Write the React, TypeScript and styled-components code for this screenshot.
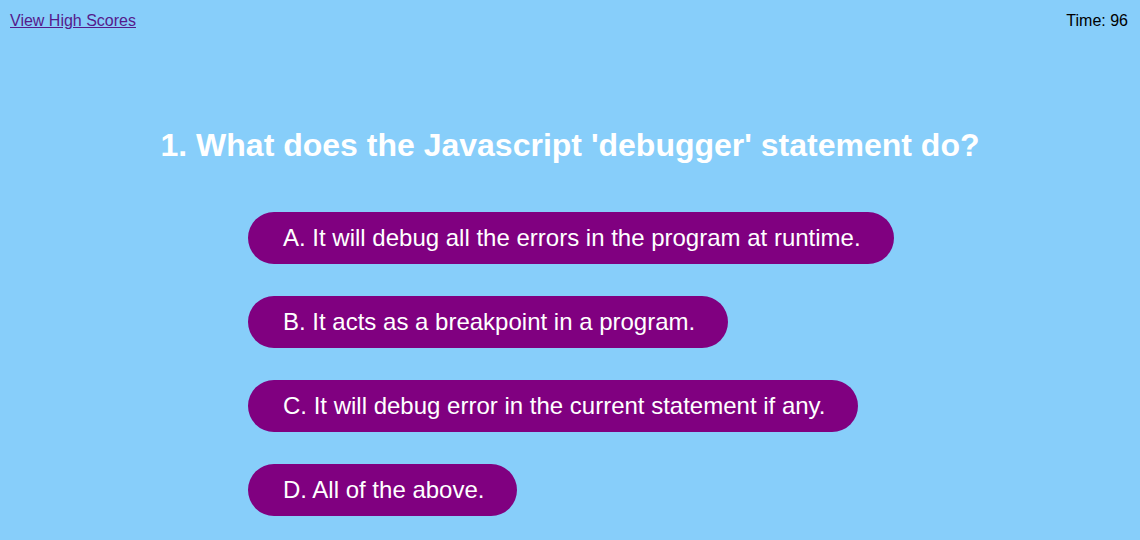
import React from 'react'
import styled, { createGlobalStyle } from 'styled-components'

const GlobalStyle = createGlobalStyle`
  html, body {
    margin: 0;
    padding: 0;
    background: #87cefa;
    font-family: "Liberation Sans", Arial, sans-serif;
  }
`

const Page = styled.div`
  width: 100%;
  min-height: 540px;
  background: #87cefa;
`

const Header = styled.header`
  display: flex;
  justify-content: space-between;
  align-items: center;
  padding: 12px 12px 0 10px;
  font-size: 16px;
`

const ScoresLink = styled.a`
  color: #551a8b;
  text-decoration: underline;
`

const Timer = styled.span`
  color: #000;
`

const Quiz = styled.main`
  display: flex;
  flex-direction: column;
  align-items: center;
  margin-top: 97px;
`

const Question = styled.h1`
  margin: 0 0 48px;
  color: #fff;
  font-size: 32px;
  font-weight: bold;
  text-align: center;
`

const Choices = styled.div`
  display: flex;
  flex-direction: column;
  align-items: flex-start;
  gap: 32px;
  width: 644px;
`

const Choice = styled.button`
  height: 52px;
  padding: 0 33px 0 35px;
  border: none;
  border-radius: 26px;
  background: #800080;
  color: #fff;
  font-family: "Liberation Sans", Arial, sans-serif;
  font-size: 24px;
  white-space: nowrap;
  cursor: pointer;
`

const choices = [
  'A. It will debug all the errors in the program at runtime.',
  'B. It acts as a breakpoint in a program.',
  'C. It will debug error in the current statement if any.',
  'D. All of the above.',
]

export default function App() {
  return (
    <Page>
      <GlobalStyle />
      <Header>
        <ScoresLink href="#">View High Scores</ScoresLink>
        <Timer>Time: 96</Timer>
      </Header>
      <Quiz>
        <Question>1. What does the Javascript 'debugger' statement do?</Question>
        <Choices>
          {choices.map((c) => (
            <Choice key={c}>{c}</Choice>
          ))}
        </Choices>
      </Quiz>
    </Page>
  )
}
